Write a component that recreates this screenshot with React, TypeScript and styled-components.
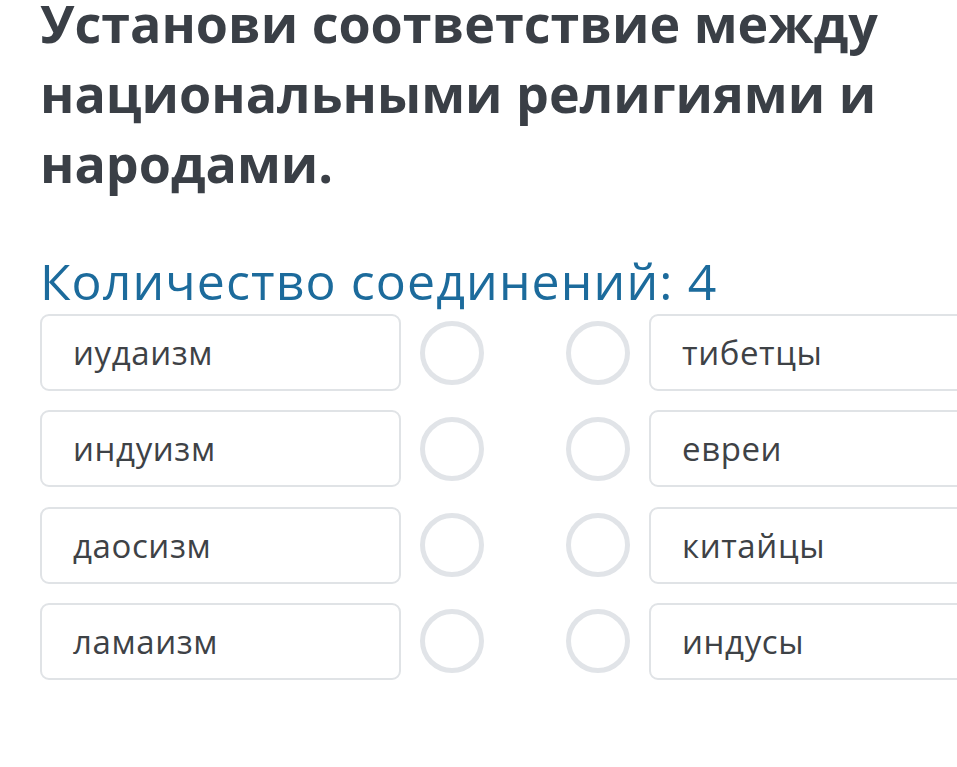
import React from "react";
import styled, { createGlobalStyle } from "styled-components";

const Global = createGlobalStyle`
  html, body { margin: 0; padding: 0; background: #ffffff; }
  body { overflow: hidden; width: 957px; height: 767px; }
`;

const Page = styled.div`
  width: 957px;
  height: 767px;
  overflow: hidden;
  padding-left: 40px;
  box-sizing: border-box;
  font-family: "Open Sans", "Noto Sans", sans-serif;
`;

const Title = styled.h1`
  margin: -12px 0 0 0;
  font-size: 52px;
  line-height: 70px;
  font-weight: 700;
  color: #3a3f46;
  letter-spacing: 0;
`;

const Count = styled.div`
  margin-top: 55px;
  font-size: 50px;
  line-height: 56px;
  font-weight: 400;
  color: #1c6b9c;
  letter-spacing: 1.1px;
`;

const List = styled.div`
  margin-top: 5px;
  display: flex;
  flex-direction: column;
  gap: 19.3px;
`;

const Row = styled.div`
  display: flex;
  align-items: center;
  gap: 19px;
  height: 77px;
`;

const Dots = styled.div`
  display: flex;
  gap: 82px;
  flex: 0 0 auto;
`;

const Card = styled.div`
  flex: 0 0 361px;
  height: 77px;
  box-sizing: border-box;
  border: 2px solid #e0e3e6;
  border-radius: 9px;
  padding-left: 31px;
  display: flex;
  align-items: center;
  font-size: 33px;
  letter-spacing: 0.6px;
  color: #3e4246;
  background: #fff;
`;

const Dot = styled.div`
  width: 64px;
  height: 64px;
  box-sizing: border-box;
  border: 5px solid #e1e4e8;
  border-radius: 50%;
`;

const left = ["иудаизм", "индуизм", "даосизм", "ламаизм"];
const right = ["тибетцы", "евреи", "китайцы", "индусы"];

export default function App() {
  return (
    <>
      <Global />
      <Page>
        <Title>
          Установи соответствие между национальными религиями и народами.
        </Title>
        <Count>Количество соединений: 4</Count>
        <List>
          {left.map((l, i) => (
            <Row key={l}>
              <Card>{l}</Card>
              <Dots>
                <Dot />
                <Dot />
              </Dots>
              <Card>{right[i]}</Card>
            </Row>
          ))}
        </List>
      </Page>
    </>
  );
}
